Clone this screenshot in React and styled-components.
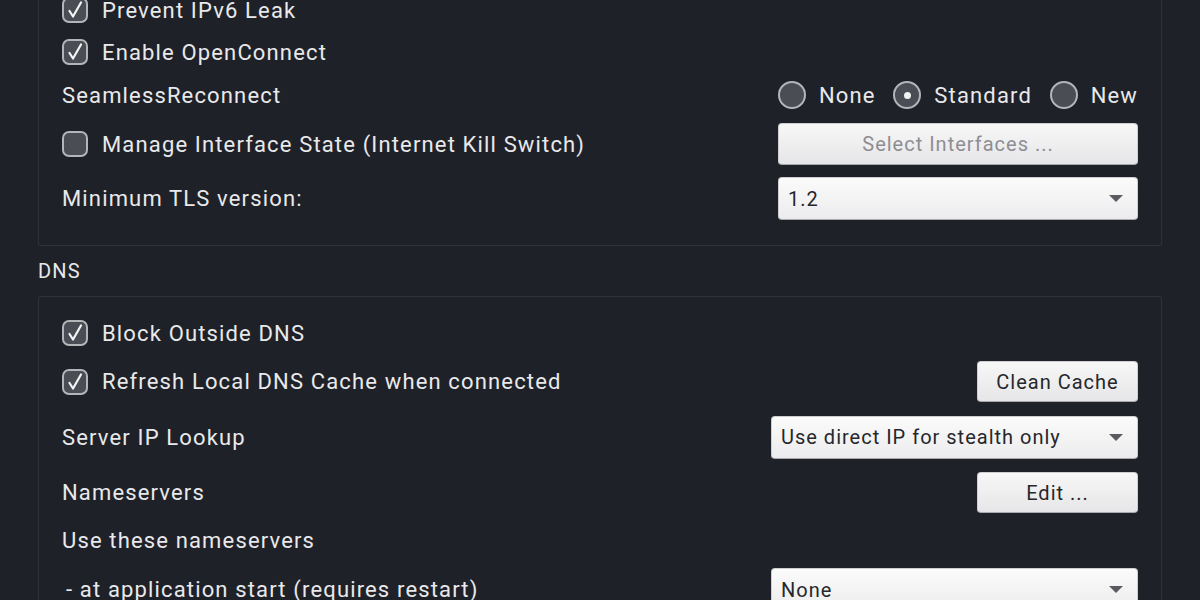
import React from "react";
import styled, { createGlobalStyle } from "styled-components";

const Global = createGlobalStyle`
  html, body { margin: 0; padding: 0; background: #1f2129; overflow: hidden; }
  body { font-family: Roboto, "Noto Sans", "Liberation Sans", sans-serif; }
`;

const Viewport = styled.div`
  width: 1200px;
  height: 600px;
  overflow: hidden;
  background: #1f2129;
  color: #e9e9eb;
  font-size: 22px;
  letter-spacing: 1.15px;
`;

const Content = styled.div`
  margin-top: -26px;
  padding: 0 38px;
`;

const GroupBox = styled.section`
  border: 1px solid #2f323a;
  border-radius: 3px;
  padding: ${(p) => p.$pad || "20px 23px 25px 23px"};
  display: flex;
  flex-direction: column;
  gap: ${(p) => p.$gap || 12}px;
`;

const GroupTitle = styled.div`
  font-size: 20px;
  height: 50px;
  display: flex;
  align-items: center;
  color: #e8e8ea;
`;

const Row = styled.div`
  display: flex;
  align-items: center;
  justify-content: space-between;
  height: ${(p) => p.$h || 30}px;
`;

const Label = styled.span`
  display: flex;
  align-items: center;
  gap: 14px;
  white-space: nowrap;
  padding-left: ${(p) => p.$indent || 0}px;
`;

const BoxMark = styled.span`
  width: 26px;
  height: 26px;
  box-sizing: border-box;
  border: 2px solid #b3b5b9;
  border-radius: 7px;
  background: #4b4d54;
  display: inline-flex;
  align-items: center;
  justify-content: center;
  flex: none;
`;

const RadioGroup = styled.div`
  display: flex;
  align-items: center;
  width: 360px;
  justify-content: space-between;
`;

const RadioItem = styled.span`
  display: flex;
  align-items: center;
  gap: 13px;
`;

const RadioMark = styled.span`
  width: 28px;
  height: 28px;
  box-sizing: border-box;
  border: 2px solid #b3b5b9;
  border-radius: 50%;
  background: #4b4d54;
  display: inline-flex;
  align-items: center;
  justify-content: center;
  &::after {
    content: "";
    width: 7px;
    height: 7px;
    border-radius: 50%;
    background: #f2f2f2;
    display: ${(p) => (p.$on ? "block" : "none")};
  }
`;

const Button = styled.button`
  width: ${(p) => p.$w || 360}px;
  height: ${(p) => p.$h || 42}px;
  box-sizing: border-box;
  border: 1px solid #cfcfd2;
  border-bottom-color: #a9a9ad;
  border-radius: 4px;
  background: linear-gradient(#f7f7f7, #e6e6e8);
  font-family: inherit;
  font-size: 20px;
  letter-spacing: 1px;
  color: ${(p) => (p.disabled ? "#8e8e92" : "#26272b")};
  padding: 0;
  cursor: default;
`;

const Combo = styled.div`
  width: ${(p) => p.$w || 360}px;
  height: 43px;
  box-sizing: border-box;
  border: 1px solid #cfcfd2;
  border-bottom-color: #a9a9ad;
  border-radius: 4px;
  background: linear-gradient(#fbfbfb, #ececee);
  color: #26272b;
  font-size: 20px;
  letter-spacing: 1px;
  display: flex;
  align-items: center;
  justify-content: space-between;
  padding: 0 14px 0 9px;
`;

const Arrow = styled.span`
  width: 0;
  height: 0;
  border-left: 7px solid transparent;
  border-right: 7px solid transparent;
  border-top: 7px solid #5a5b60;
`;

const Check = ({ on = true }) => (
  <BoxMark>
    {on && (
      <svg width="18" height="18" viewBox="0 0 18 18">
        <path d="M3.5 10 L7 15.5 L15 1.5" fill="none" stroke="#f4f4f4" strokeWidth="2.2" strokeLinecap="round" strokeLinejoin="round" />
      </svg>
    )}
  </BoxMark>
);

export default function App() {
  return (
    <Viewport>
      <Global />
      <Content>
        <GroupBox>
          <Row>
            <Label><Check />Prevent IPv6 Leak</Label>
          </Row>
          <Row>
            <Label><Check />Enable OpenConnect</Label>
          </Row>
          <Row $h={32}>
            <Label>SeamlessReconnect</Label>
            <RadioGroup>
              <RadioItem><RadioMark />None</RadioItem>
              <RadioItem><RadioMark $on />Standard</RadioItem>
              <RadioItem><RadioMark />New</RadioItem>
            </RadioGroup>
          </Row>
          <Row $h={42}>
            <Label><Check on={false} />Manage Interface State (Internet Kill Switch)</Label>
            <Button disabled>Select Interfaces ...</Button>
          </Row>
          <Row $h={43}>
            <Label>Minimum TLS version:</Label>
            <Combo>1.2<Arrow /></Combo>
          </Row>
        </GroupBox>
        <GroupTitle>DNS</GroupTitle>
        <GroupBox $pad="21px 23px 22px 23px" $gap={13}>
          <Row>
            <Label><Check />Block Outside DNS</Label>
          </Row>
          <Row $h={41}>
            <Label><Check />Refresh Local DNS Cache when connected</Label>
            <Button $w={161} $h={41}>Clean Cache</Button>
          </Row>
          <Row $h={44}>
            <Label>Server IP Lookup</Label>
            <Combo $w={367}>Use direct IP for stealth only<Arrow /></Combo>
          </Row>
          <Row $h={41}>
            <Label>Nameservers</Label>
            <Button $w={161} $h={41}>Edit ...</Button>
          </Row>
          <Row $h={29}>
            <Label>Use these nameservers</Label>
          </Row>
          <Row $h={43}>
            <Label $indent={4}>- at application start (requires restart)</Label>
            <Combo $w={367}>None<Arrow /></Combo>
          </Row>
        </GroupBox>
      </Content>
    </Viewport>
  );
}
